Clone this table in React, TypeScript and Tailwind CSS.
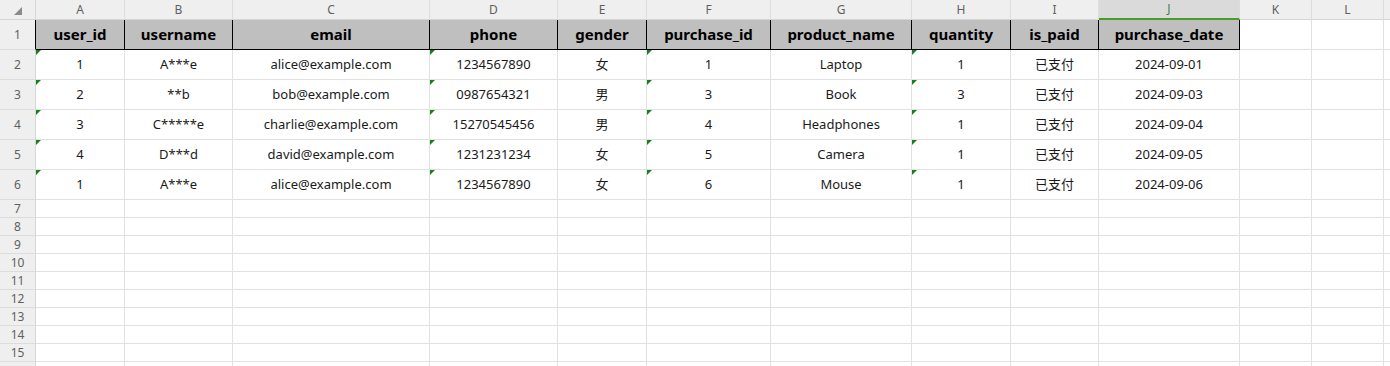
const colLetters = ["A", "B", "C", "D", "E", "F", "G", "H", "I", "J", "K", "L", ""];

const colWidths = [
  "w-[89px]",
  "w-[108px]",
  "w-[197px]",
  "w-[128px]",
  "w-[89px]",
  "w-[124px]",
  "w-[141px]",
  "w-[99px]",
  "w-[88px]",
  "w-[141px]",
  "w-[72px]",
  "w-[72px]",
  "w-[72px]",
];

const headers = [
  "user_id",
  "username",
  "email",
  "phone",
  "gender",
  "purchase_id",
  "product_name",
  "quantity",
  "is_paid",
  "purchase_date",
];

const rows = [
  ["1", "A***e", "alice@example.com", "1234567890", "女", "1", "Laptop", "1", "已支付", "2024-09-01"],
  ["2", "**b", "bob@example.com", "0987654321", "男", "3", "Book", "3", "已支付", "2024-09-03"],
  ["3", "C*****e", "charlie@example.com", "15270545456", "男", "4", "Headphones", "1", "已支付", "2024-09-04"],
  ["4", "D***d", "david@example.com", "1231231234", "女", "5", "Camera", "1", "已支付", "2024-09-05"],
  ["1", "A***e", "alice@example.com", "1234567890", "女", "6", "Mouse", "1", "已支付", "2024-09-06"],
];

// columns stored as text get the little green corner mark
const textNumberCols = [0, 3, 5, 7];

const RowHead = ({ label, height, dark }: { label: string; height: string; dark?: boolean }) => (
  <div
    className={`w-[36px] shrink-0 ${height} flex items-center justify-center bg-[#efefef] text-[12px] text-[#5f5f5f] border-b border-[#dcdcdc] border-r ${
      dark ? "border-r-black" : "border-r-[#d6d6d6]"
    }`}
  >
    {label}
  </div>
);

const App = () => {
  return (
    <div className="w-[1390px] h-[366px] overflow-hidden bg-white font-['Noto_Sans','Noto_Sans_CJK_SC',sans-serif] text-[#1a1a1a]">
      {/* column letters */}
      <div className="flex h-[20px]">
        <div className="w-[36px] shrink-0 h-[20px] bg-[#efefef] border-r border-b border-[#d6d6d6] flex items-end justify-end pr-[13px] pb-[4px]">
          <svg width="8" height="8" viewBox="0 0 8 8">
            <polygon points="8,0 8,8 0,8" fill="#8a8a8a" />
          </svg>
        </div>
        {colLetters.map((c, i) => (
          <div
            key={i}
            className={`${colWidths[i]} shrink-0 h-[20px] flex items-center justify-center text-[12px] border-r border-[#dcdcdc] ${
              c === "J"
                ? "bg-[#dadada] text-[#3b7d4f] border-b-2 border-b-[#4a9a2c]"
                : "bg-[#efefef] text-[#5f5f5f] border-b border-b-[#d6d6d6]"
            }`}
          >
            {c}
          </div>
        ))}
      </div>

      {/* header row */}
      <div className="flex h-[30px]">
        <RowHead label="1" height="h-[30px]" dark />
        {colLetters.map((c, i) =>
          i < headers.length ? (
            <div
              key={i}
              className={`${colWidths[i]} shrink-0 h-[30px] flex items-center justify-center bg-[#bfbfbf] text-[15px] font-bold text-black border-r border-b border-black`}
            >
              {headers[i]}
            </div>
          ) : (
            <div key={i} className={`${colWidths[i]} shrink-0 h-[30px] border-r border-b border-[#e1e1e1]`} />
          )
        )}
      </div>

      {/* data rows */}
      {rows.map((row, r) => (
        <div key={r} className="flex h-[30px]">
          <RowHead label={String(r + 2)} height="h-[30px]" />
          {colLetters.map((c, i) => (
            <div
              key={i}
              className={`${colWidths[i]} shrink-0 h-[30px] relative flex items-center justify-center text-[13px] border-r border-b border-[#e1e1e1]`}
            >
              {textNumberCols.includes(i) && (
                <span className="absolute top-0 left-0 w-0 h-0 border-t-[5px] border-t-[#16801c] border-r-[5px] border-r-transparent" />
              )}
              {row[i] ?? ""}
            </div>
          ))}
        </div>
      ))}

      {/* empty rows */}
      {[7, 8, 9, 10, 11, 12, 13, 14, 15, 16].map((n) => (
        <div key={n} className="flex h-[18px]">
          <RowHead label={n < 16 ? String(n) : ""} height="h-[18px]" />
          {colLetters.map((c, i) => (
            <div key={i} className={`${colWidths[i]} shrink-0 h-[18px] border-r border-b border-[#e1e1e1]`} />
          ))}
        </div>
      ))}
    </div>
  );
};

export default App;
